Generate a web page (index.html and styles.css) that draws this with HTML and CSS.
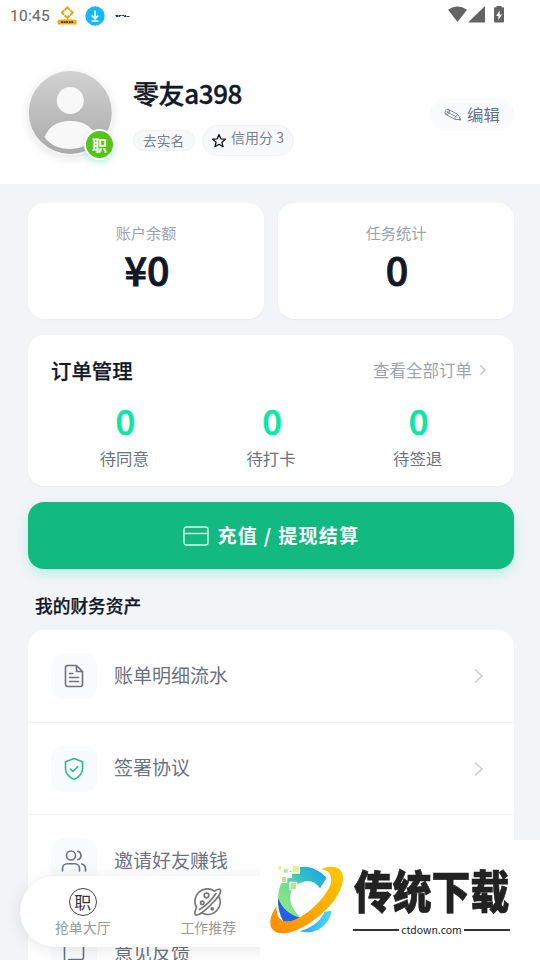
FILE: index.html
```html
<!DOCTYPE html>
<html lang="zh-CN">
<head>
<meta charset="utf-8">
<title>我的</title>
<link rel="stylesheet" href="styles.css">
</head>
<body>
<header class="header">
  <div class="status">
    <span class="time">10:45</span>
    <svg class="st-app" width="20" height="20" viewBox="0 0 20 20"><path d="M7.700 4l2.600-2.600L12.900 4M13.500 4.400L15.700 6.600l-2.600 2.600M12.600 9.500l-2.300 2.300-2.600-2.600M7.100 8.800L4.900 6.600l2.400-2.400" fill="none" stroke="#eea111" stroke-width="2"/><path d="M.5 14q9.500-1.500 19 0v4.500H.5z" fill="#f2aa08"/><path d="M4 16.200h12" stroke="#473814" stroke-width="1.700" stroke-dasharray="2 .6"/></svg>
    <svg class="st-down" width="20" height="20" viewBox="0 0 20 20"><circle cx="10" cy="10" r="9.700" fill="#13b9fb"/><path d="M10 4.500v8M6.700 9.500l3.300 3.200 3.300-3.200M6.500 15h7" fill="none" stroke="#fff" stroke-width="1.700"/></svg>
    <svg class="st-word" width="16" height="4" viewBox="0 0 16 4"><path d="M.5 1.500h10.500M1 2.500h4M9 2.500h5.500" fill="none" stroke="#1d355f" stroke-width="1.200" stroke-dasharray="2.500 .5"/></svg>
    <svg class="st-right" width="58" height="18" viewBox="0 0 58 18"><g fill="#636363"><path d="M0 3.700Q9.500-2.700 19 3.700L9.500 16z"/><path d="M20.500 16.500V16L37 0v16.500z"/><path d="M46 2.300q0-1 1-1h1.500V0h5v1.300H55q1 0 1 1v13q0 1.200-1 1.200h-8q-1 0-1-1.200z"/></g><path d="M51.600 4.500L48.200 10h2.200v4l3.600-5.500h-2.400z" fill="#fff"/></svg>
  </div>
  <div class="profile">
    <div class="avatar">
      <svg width="86" height="86" viewBox="0 0 86 86"><defs><linearGradient id="av" x2="0" y2="1"><stop offset="0" stop-color="#d2d2d2"/><stop offset="1" stop-color="#a9a9a9"/></linearGradient></defs><circle cx="42.300" cy="42.700" r="42.700" fill="#f5f7f7"/><circle cx="42.300" cy="42.500" r="41.500" fill="url(#av)"/><g fill="#f8f8f8"><circle cx="42.300" cy="30.500" r="13.500"/><path d="M16.500 67Q23 51 42 51Q62 51 68.500 67Q58 79 42 79Q25 79 16.500 67z"/></g></svg>
      <span class="badge">职</span>
    </div>
    <div class="who">
      <div class="name">零友a398</div>
      <div class="pills"><span class="pill">去实名</span><span class="pill credit"><svg width="16" height="16" viewBox="0 0 16 16"><path d="M8 1.600l1.800 4.200 4.600.4-3.500 3 1.100 4.500L8 11.300l-4 2.400 1.100-4.500-3.500-3 4.600-.4z" fill="none" stroke="#111" stroke-width="1.300" stroke-linejoin="round"/></svg><span>信用分 3</span></span></div>
    </div>
    <div class="edit"><svg width="18" height="14" viewBox="0 0 18 14"><path d="M3.800 1.200L14 6.500l2.800 5.300-6-.5L1.200 6C.3 3.500 2 1.200 3.800 1.200zM3.800 1.200C5 3 3 6.300 1.200 6M2.500 3.700l10 5.300M14 6.500c-1.800.8-3 2.500-3.200 4.800M5.200 2c1 2-1 5-2.600 4.800M15.300 10.500l1.500 1.300-2-.2" fill="none" stroke="#737c8b" stroke-width=".9"/></svg><span>编辑</span></div>
  </div>
</header>
<main class="main">
  <section class="stats">
    <div class="card stat"><div class="stat-label">账户余额</div><div class="stat-num">¥0</div></div>
    <div class="card stat"><div class="stat-label">任务统计</div><div class="stat-num">0</div></div>
  </section>
  <section class="card orders">
    <div class="orders-head"><h2>订单管理</h2><span class="all">查看全部订单<svg width="8" height="12" viewBox="0 0 8 12"><path d="M1.500 1.500L6 6l-4.500 4.500" fill="none" stroke="#bcc1c9" stroke-width="1.300"/></svg></span></div>
    <div class="orders-grid">
      <div><b>0</b><span>待同意</span></div>
      <div><b>0</b><span>待打卡</span></div>
      <div><b>0</b><span>待签退</span></div>
    </div>
  </section>
  <div class="pay"><svg width="26" height="20" viewBox="0 0 26 20"><rect x="1" y="1" width="24" height="18" rx="2.500" fill="none" stroke="#d9f5ea" stroke-width="1.400"/><path d="M1 7.500h24" stroke="#d9f5ea" stroke-width="1.400"/></svg><span>充值 / 提现结算</span></div>
  <h3 class="section-title">我的财务资产</h3>
  <section class="card list">
    <div class="row"><span class="ico"><svg width="24" height="24" viewBox="0 0 24 24"><path d="M14.500 1.500H5.700A2.200 2.200 0 0 0 3.500 3.700v16.600a2.200 2.200 0 0 0 2.200 2.200h12.600a2.200 2.200 0 0 0 2.200-2.200V7.500zM14.500 1.500v6h6M7.500 9.500h3.300M7.500 13.500h9M7.500 17.500h9"/></svg></span><span class="txt">账单明细流水</span><svg class="chev" width="10" height="16" viewBox="0 0 10 16"><path d="M1.500 2l6.500 6-6.500 6"/></svg></div>
    <div class="row"><span class="ico green"><svg width="24" height="24" viewBox="0 0 24 24"><path d="M12 1.500l8.500 3.200v7c0 5.300-4 8.600-8.500 10.800-4.500-2.200-8.500-5.500-8.500-10.800v-7zM8.500 12l2.500 2.500 4.800-5"/></svg></span><span class="txt">签署协议</span><svg class="chev" width="10" height="16" viewBox="0 0 10 16"><path d="M1.500 2l6.500 6-6.500 6"/></svg></div>
    <div class="row"><span class="ico"><svg width="26" height="24" viewBox="0 0 26 24"><circle cx="10" cy="6.500" r="4.500"/><path d="M1.500 22v-2.500a4.800 4.800 0 0 1 4.800-4.800h7.400a4.800 4.800 0 0 1 4.800 4.800V22M16.800 2.200a4.500 4.500 0 0 1 0 8.600M24.500 22v-2.500c0-2.300-1.500-4-3.700-4.600"/></svg></span><span class="txt">邀请好友赚钱</span></div>
    <div class="row"><span class="ico"><svg width="24" height="24" viewBox="0 0 24 24"><path d="M2.500 22V5a2 2 0 0 1 2-2h15a2 2 0 0 1 2 2v10.500a2 2 0 0 1-2 2H7z"/></svg></span><span class="txt">意见反馈</span></div>
  </section>
</main>
<nav class="tabs">
  <div class="tab"><span class="seal">职</span><span>抢单大厅</span></div>
  <div class="tab"><svg width="28" height="28" viewBox="0 0 28 28" fill="none" stroke="#777" stroke-width="1.700" stroke-linecap="round" stroke-linejoin="round"><path d="M20.500 3.100A12.500 12.500 0 0 0 2.500 19.500M25.200 9A12.500 12.500 0 0 1 8.500 25.300M20.500 3.100c3-2.200 6-2.500 6.200-.8.300 2.500-2.300 6.400-6.700 11.200C13.500 20.500 4.500 28.500 1.500 26.800c-1-.9-.4-4 1-7.300M22 5.500C18 11.500 10.500 18.500 5.500 21.500"/><circle cx="12.500" cy="7.500" r="2.300"/><circle cx="8.200" cy="14.800" r="1.700"/><circle cx="18.200" cy="20.800" r="1"/></svg><span>工作推荐</span></div>
</nav>
<aside class="brand">
  <svg class="mark" width="80" height="74" viewBox="24 162 240 222">
    <defs><linearGradient id="c1" x1="0" y1="1" x2="1" y2="0"><stop offset="0" stop-color="#a2ed73"/><stop offset=".45" stop-color="#6bdc97"/><stop offset=".65" stop-color="#35bfc4"/><stop offset="1" stop-color="#119ff0"/></linearGradient><linearGradient id="c2" x1="0" y1="1" x2="1" y2="0"><stop offset="0" stop-color="#ff8b00"/><stop offset="1" stop-color="#ffc800"/></linearGradient><linearGradient id="c3"><stop offset="0" stop-color="#35a0f5"/><stop offset="1" stop-color="#41ddff"/></linearGradient></defs>
    <path d="M92 183Q148 150 200 203L180 235Q157 203 122 218C84 234 79 277 112 312L122 323Q92 340 70 334C45 292 47 216 92 183z" fill="url(#c1)"/>
    <path d="M54 264C66 294 85 313 119 323Q94 339 70 334Q52 303 54 264z" fill="#245fec"/>
    <path d="M183 178C225 160 255 175 248 215C240 263 188 318 130 350C87 373 47 380 33 350C26 330 38 305 50 288C48 320 60 337 87 334C133 327 196 265 211 225C220 195 206 180 183 178z" fill="url(#c2)"/>
    <path d="M119 364Q176 346 194 305L215 302C208 343 169 377 119 364z" fill="url(#c3)"/>
    <path d="M78 186h18v18H78z" fill="#fff"/>
    <g stroke="#fff" stroke-width="4"><path d="M96 166h22v23H96z" fill="#e3ef88"/><path d="M70 175h15v15H70z" fill="#b2e78b"/><path d="M64 199h16v18H64zM90 217h20v22H90z" fill="#b7e886"/><path d="M52 166h13v15H52z" fill="#e8f3a0"/></g>
  </svg>
  <div class="brand-text"><div class="brand-name">传统下载</div><div class="brand-url"><i></i><span>ctdown.com</span><i></i></div></div>
</aside>
</body>
</html>
```
FILE: styles.css
```css
* { box-sizing: border-box; }
body { margin: 0; width: 540px; height: 960px; overflow: hidden; position: relative; background: #f3f4f8; color: #111827; font-family: "Noto Sans CJK SC", sans-serif; }
svg { display: block; flex: none; }
.header { height: 184px; background: #fff; }
.status { height: 32px; display: flex; align-items: center; padding-left: 10px; }
.time { width: 47px; color: #6b6b6b; font: 400 15.500px/20px Roboto, sans-serif; letter-spacing: .25px; -webkit-text-stroke: .15px #6b6b6b; }
.st-down { margin-left: 8px; }
.st-word { margin-left: 10px; }
.st-right { margin: -3px 34px 0 auto; }
.profile { height: 152px; display: flex; padding: 38px 26px 0 28px; }
.avatar { position: relative; width: 86px; height: 86px; border-radius: 50%; }
.avatar > svg { filter: drop-shadow(0 3px 5px rgba(0,0,0,.1)); }
.badge { position: absolute; left: 56px; top: 59px; width: 31px; height: 31px; border: 2px solid #fff; border-radius: 50%; background: #52c41a; color: #fff; font-size: 15px; line-height: 27px; font-weight: 700; text-align: center; box-shadow: 0 3px 6px rgba(5,220,160,.28); }
.who { margin-left: 19px; }
.name { height: 46px; font-size: 26px; line-height: 46px; font-weight: 500; letter-spacing: -.4px; -webkit-text-stroke: .4px #111827; }
.pills { display: flex; align-items: center; gap: 7px; margin-top: 9px; }
.pill { display: flex; align-items: center; height: 21px; padding: 0 10px 0 9px; border: 1px solid #f0f1f4; border-radius: 16px; background: #f7f8fa; color: #7b818e; font-size: 13.700px; white-space: nowrap; line-height: 18px; }
.pill:first-child { padding-bottom: 2px; }
.credit { height: 31px; padding: 0 9px 0 8px; gap: 4px; font-size: 14px; }
.credit span { margin-top: -7px; }
.edit { width: 84px; height: 33px; margin: 28px 0 0 auto; display: flex; align-items: center; padding-left: 14px; gap: 5px; border-radius: 17px; background: #f9fafc; color: #6b7280; font-size: 16.400px; line-height: 30px; white-space: nowrap; }
.edit span { margin-top: -1px; }
.main { padding: 19px 26px 0 28px; }
.card { background: #fff; border-radius: 16px; box-shadow: 0 1px 2px rgba(0,0,0,.04); }
.stats { display: grid; grid-template-columns: 1fr 1fr; gap: 14px; }
.stat { height: 116px; padding-top: 18px; text-align: center; }
.stat-label { color: #9ca3af; font-size: 15.200px; line-height: 22px; }
.stat-num { padding-left: 2px; font-size: 39.500px; line-height: 52px; font-weight: 500; -webkit-text-stroke: .9px #111827; }
.orders { height: 151px; margin-top: 16px; padding: 20px 23px 0; }
.orders-head { display: flex; justify-content: space-between; align-items: center; height: 30px; }
h2, h3 { margin: 0; font-weight: 500; -webkit-text-stroke: .25px #111827; }
h2 { font-size: 20.400px; line-height: 30px; }
.all { display: flex; align-items: center; gap: 7px; padding-right: 4px; color: #9ca3af; font-size: 16.500px; line-height: 30px; }
.orders-grid { display: grid; grid-template-columns: repeat(3, 1fr); text-align: center; margin-top: 14px; }
.orders-grid b { display: block; height: 44px; padding-left: 2px; line-height: 42px; font-size: 34.500px; font-weight: 500; color: #08e8a5; -webkit-text-stroke: .7px #08e8a5; }
.orders-grid span { display: block; color: #6b7280; font-size: 16.400px; line-height: 30px; }
.pay { height: 67px; margin-top: 16px; display: flex; align-items: center; justify-content: center; gap: 8px; padding-left: 1px; border-radius: 16px; background: #12b981; color: #fff; font-size: 19px; font-weight: 700; letter-spacing: 1.350px; box-shadow: 0 5px 12px rgba(8,232,165,.25); white-space: pre; }
.pay span { margin-top: -2px; }
.section-title { margin: 22px 0 11px 7px; font-size: 17.700px; line-height: 28px; }
.list { height: 330px; overflow: hidden; border-radius: 16px 16px 0 0; }
.row { height: 92.500px; display: flex; align-items: center; padding: 1px 30px 0 23px; border-bottom: 1px solid #f1f2f4; }
.ico { width: 46px; height: 46px; display: flex; align-items: center; justify-content: center; border-radius: 13px; background: #f9fafc; }
.ico svg, .chev { fill: none; stroke: #6b7280; stroke-width: 1.600; stroke-linejoin: round; stroke-linecap: round; }
.ico.green svg { stroke: #22bd8b; }
.txt { margin: -3px 0 0 17px; color: #6b7280; font-size: 19px; line-height: 28px; }
.chev { margin-left: auto; stroke: #c7cbd2; }
.tabs { position: absolute; left: 20px; top: 876px; width: 500px; height: 71px; padding: 12px 0 0; display: grid; grid-template-columns: repeat(4, 125.500px); border-radius: 36px; background: #fff; box-shadow: 0 2px 16px rgba(0,0,0,.1); }
.tab { display: flex; flex-direction: column; align-items: center; color: #999; font-size: 13.900px; line-height: 21px; }
.tab > span:last-child { margin-top: 1px; }
.seal { width: 28px; height: 28px; border: 1px solid #444; border-radius: 50%; color: #333; font-size: 17px; line-height: 25px; text-align: center; }
.brand { position: absolute; left: 260px; top: 840px; width: 280px; height: 120px; padding: 24px 0 0 8px; display: flex; background: #fff; }
.brand-text { width: 157px; margin-left: 5px; color: #222; }
.brand-name { height: 56px; padding-left: 1px; font-size: 38.800px; line-height: 51px; font-weight: 900; white-space: nowrap; -webkit-text-stroke: .6px #222; transform: scaleY(1.180); }
.brand-url { display: flex; align-items: center; justify-content: space-between; height: 20px; }
.brand-url i { width: 46px; height: 2px; background: #333; }
.brand-url span { font-size: 10.500px; font-weight: 400; line-height: 20px; }
```
